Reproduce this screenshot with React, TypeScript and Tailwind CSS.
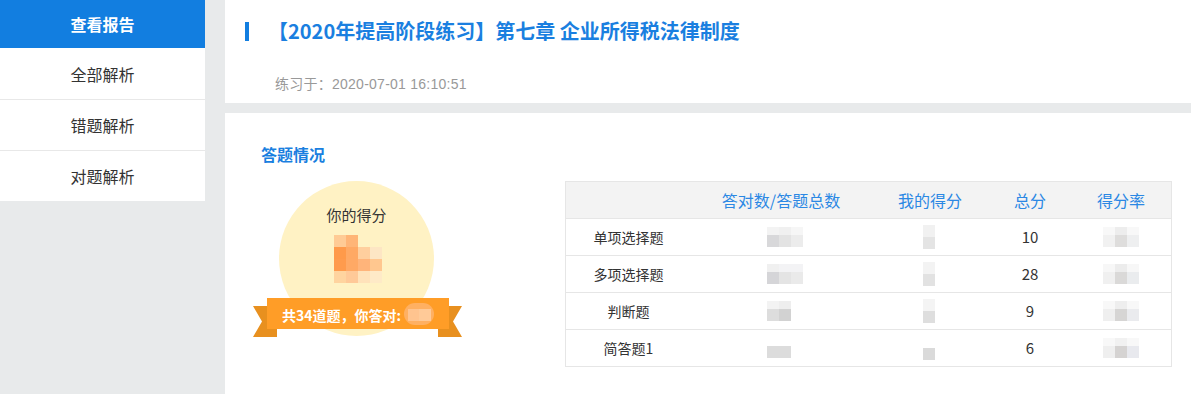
const font = { fontFamily: '"Noto Sans CJK SC", "Noto Sans", sans-serif' };
const latinFont = { fontFamily: '"Liberation Sans", "Noto Sans CJK SC", sans-serif' };

const navItems = ["全部解析", "错题解析", "对题解析"];

// mosaic placeholders standing in for the blurred scores
type Cells = string[][];

const rows: {
  label: string;
  count: Cells;
  mine: Cells;
  total: string;
  rate: Cells;
}[] = [
  {
    label: "单项选择题",
    count: [
      ["#f3f3f3", "#f0f0f0", "#f6f6f6"],
      ["#d8d8da", "#e3e3e3", "#ececec"],
    ],
    mine: [["#f1f1f1"], ["#e4e4e4"]],
    total: "10",
    rate: [
      ["#f8f8f8", "#ededed", "#f8f8f8"],
      ["#f1f1f1", "#dedddc", "#eeeff0"],
    ],
  },
  {
    label: "多项选择题",
    count: [
      ["#f0f0f0", "#f3f3f5", "#f3f3f5"],
      ["#d5d5d8", "#e4e4e4", "#eaeaea"],
    ],
    mine: [["#f3f3f3"], ["#e2e2e2"]],
    total: "28",
    rate: [
      ["#f7f7f7", "#ececec", "#f7f7f7"],
      ["#f0f0f0", "#dad9d8", "#eaecee"],
    ],
  },
  {
    label: "判断题",
    count: [
      ["#f3f3f3", "#eeeeee"],
      ["#dddddd", "#d2d2d2"],
    ],
    mine: [["#f4f4f4"], ["#dedede"]],
    total: "9",
    rate: [
      ["#f8f8f8", "#eeeeee", "#f8f8f8"],
      ["#efefef", "#d6d5d4", "#eaebee"],
    ],
  },
  {
    label: "简答题1",
    count: [
      ["transparent", "transparent"],
      ["#dcdcdc", "#dcdcdc"],
    ],
    mine: [["transparent"], ["#dadada"]],
    total: "6",
    rate: [
      ["#f8f8f8", "#f1f1f1", "#f8f8f8"],
      ["#efefef", "#d5d3d2", "#e8e9ee"],
    ],
  },
];

function Mosaic({ cells, tall }: { cells: Cells; tall?: boolean }) {
  return (
    <div className="flex flex-col">
      {cells.map((r, i) => (
        <div key={i} className={i === 0 ? (tall ? "flex h-3" : "flex h-2") : "flex h-3"}>
          {r.map((c, j) => (
            <div key={j} className="w-3" style={{ backgroundColor: c }} />
          ))}
        </div>
      ))}
    </div>
  );
}

const scoreCells = [
  ["#ffcb95", "#ffb577", "transparent", "transparent"],
  ["#ff9a4a", "#ffa964", "#ffcf9e", "#fde6c4"],
  ["#ff9b4d", "#ffa965", "#ffb47a", "#ffc78f"],
  ["#ffd49f", "#ffc998", "#ffe2ba", "#feeac7"],
];

function Ribbon() {
  return (
    <div className="absolute left-0 top-[117px] h-[39px] w-[209px]">
      <svg width="209" height="39" viewBox="0 0 209 39" className="absolute inset-0">
        <polygon points="0,8 24,8 24,39 0,39 9,23.5" fill="#e8901f" />
        <polygon points="185,8 209,8 200,23.5 209,39 185,39" fill="#e8901f" />
        <rect x="14" y="0" width="182" height="31" fill="#ff9d27" />
      </svg>
      <div className="absolute left-[14px] top-0 flex h-[31px] w-[182px] items-center pl-[15px] text-[14px] font-bold leading-[20px] text-white">
        <span className="mt-[2px]">共34道题，你答对:</span>
        <div className="ml-[3px] flex h-[22px] w-[30px] items-center justify-center rounded-full bg-[#ffb062]">
          <div className="mt-[2px] flex h-3">
            <div className="w-[11px] bg-[#ffc48f]" />
            <div className="w-3 bg-[#ffca98]" />
          </div>
        </div>
      </div>
    </div>
  );
}

export default function App() {
  return (
    <div className="flex h-[394px] w-full overflow-hidden bg-[#e8eaeb]" style={font}>
      <aside className="w-[205px] shrink-0 self-start bg-white">
        <div className="flex h-[48px] items-center justify-center bg-[#127ee0] text-[16px] font-bold text-white">
          查看报告
        </div>
        {navItems.map((t, i) => (
          <div
            key={t}
            className={
              i === 0
                ? "flex h-[51px] items-center justify-center text-[16px] text-[#333]"
                : "flex h-[51px] items-center justify-center border-t border-[#e8e8e8] text-[16px] text-[#333]"
            }
          >
            {t}
          </div>
        ))}
      </aside>

      <main className="ml-[20px] flex min-w-0 flex-1 flex-col">
        <section className="h-[103px] shrink-0 bg-white pl-[20px] pt-[21px]">
          <div className="flex items-center gap-[19px]">
            <div className="h-[19px] w-1 bg-[#127ee0]" />
            <h1 className="text-[20px] font-bold leading-[20px] text-[#1a7fe0]">
              【2020年提高阶段练习】第七章 企业所得税法律制度
            </h1>
          </div>
          <div
            className="mt-[33px] pl-[30px] text-[14px] leading-[20px] tracking-[0.25px] text-[#999]"
            style={latinFont}
          >
            练习于：2020-07-01 16:10:51
          </div>
        </section>

        <section className="mt-[10px] flex-1 bg-white pt-[29px]">
          <h2 className="pl-[36px] text-[16px] font-bold leading-6 text-[#1a7fe0]">答题情况</h2>

          <div className="mt-[15px] flex items-start pl-[28px]">
            <div className="relative h-[156px] w-[209px] shrink-0">
              <div className="ml-[26px] flex h-[155px] w-[155px] flex-col items-center rounded-full bg-[#fff2c4] pt-[22px]">
                <div className="text-[15px] leading-6 text-[#333]">你的得分</div>
                <div className="ml-[3px] mt-[8px] flex flex-col">
                  {scoreCells.map((r, i) => (
                    <div key={i} className="flex h-3">
                      {r.map((c, j) => (
                        <div key={j} className="w-3" style={{ backgroundColor: c }} />
                      ))}
                    </div>
                  ))}
                </div>
              </div>
              <Ribbon />
            </div>

            <div className="ml-[103px] w-[607px] shrink-0 border border-[#e6e6e6] text-[14px] text-[#333]">
              <div className="grid h-[36px] grid-cols-[125px_180px_118px_82px_100px] items-center bg-[#f3f3f3] text-center text-[16px] text-[#2b88e4]">
                <div />
                <div>答对数/答题总数</div>
                <div>我的得分</div>
                <div>总分</div>
                <div>得分率</div>
              </div>
              {rows.map((r) => (
                <div
                  key={r.label}
                  className="grid h-[37px] grid-cols-[125px_180px_118px_82px_100px] items-center border-t border-[#e6e6e6] text-center"
                >
                  <div>{r.label}</div>
                  <div className="flex justify-start pl-[76px]">
                    <Mosaic cells={r.count} />
                  </div>
                  <div className="flex justify-center pr-[2px]">
                    <Mosaic cells={r.mine} tall />
                  </div>
                  <div className="text-[15px]">{r.total}</div>
                  <div className="flex justify-center">
                    <Mosaic cells={r.rate} />
                  </div>
                </div>
              ))}
            </div>
          </div>
        </section>
      </main>
    </div>
  );
}
